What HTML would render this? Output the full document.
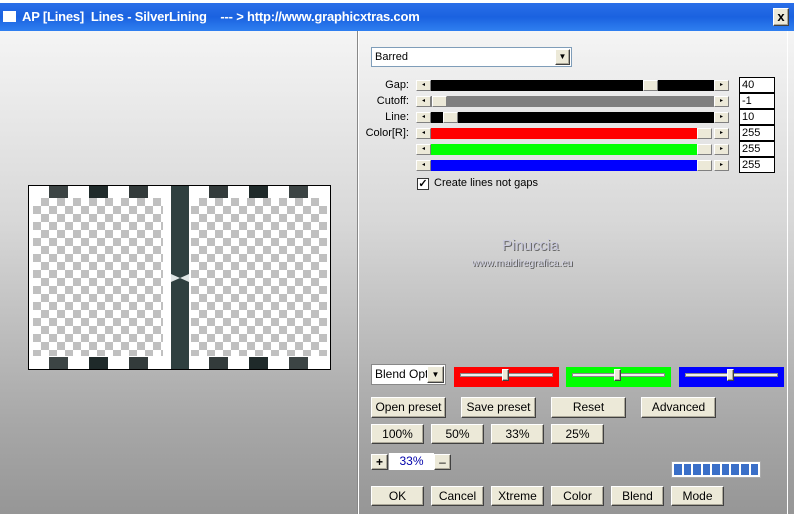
<!DOCTYPE html>
<html><head><meta charset="utf-8"><style>
*{margin:0;padding:0;box-sizing:border-box}
body{width:794px;height:514px;overflow:hidden;position:relative;font-family:"Liberation Sans",sans-serif;font-size:11px;background:linear-gradient(#fff 0,#f4f4f4 35px,#d8d8d8 220px,#a8a8a8 420px,#969696 514px)}
.a{position:absolute}
.title{left:0;top:3px;width:794px;height:28px;background:linear-gradient(#2a6ee8,#1a62e0 50%,#2f7ff0);color:#fff;font-weight:bold;font-size:13px;line-height:28px;padding-left:22px;letter-spacing:-0.2px}
.btn{position:absolute;background:#ece9d8;border:1px solid;border-color:#fff #404040 #404040 #fff;box-shadow:inset -1px -1px 0 #aca899;text-align:center;font-size:12px;color:#000}
.arr{position:absolute;width:15px;height:11px;background:#ece9d8;border:1px solid;border-color:#fff #808080 #808080 #fff;font-size:6px;line-height:9px;text-align:center}
.val{position:absolute;left:739px;width:36px;height:16px;background:#fff;border:1px solid #000;font-size:11px;line-height:14px;padding-left:2px}
.lbl{position:absolute;width:60px;left:349px;text-align:right;font-size:11px}
.chk{background-color:#fff;background-image:linear-gradient(45deg,#c0c0c0 25%,transparent 25%,transparent 75%,#c0c0c0 75%),linear-gradient(45deg,#c0c0c0 25%,transparent 25%,transparent 75%,#c0c0c0 75%);background-size:16px 16px;background-position:0 0,8px 8px}
</style></head><body>
<div class="a title">AP [Lines]&nbsp; Lines - SilverLining &nbsp;&nbsp; --- &gt; http://www.graphicxtras.com</div>
<div class="a" style="left:3px;top:11px;width:13px;height:11px;background:#fff;border-top:2px solid #fff"></div>
<div class="btn" style="left:773px;top:8px;width:16px;height:18px;font-weight:bold;font-size:13px;line-height:15px">x</div>
<div class="a" style="left:357px;top:31px;width:1px;height:483px;background:#888"></div>
<div class="a" style="left:358px;top:31px;width:1px;height:483px;background:#fff"></div>
<div class="a" style="left:787px;top:31px;width:1px;height:483px;background:#fff"></div>

<div class="a" style="left:28px;top:185px;width:303px;height:185px;border:1px solid #000;background:#fff">
 <div class="a chk" style="left:4px;top:12px;width:130px;height:158px"></div>
 <div class="a chk" style="left:162px;top:12px;width:136px;height:158px"></div>
 <div class="a" style="left:142px;top:0;width:18px;height:183px;background:#2f4040"></div>
 <div class="a" style="left:142px;top:88px;width:18px;height:8px;background:#dfe5e5;clip-path:polygon(0 0,50% 50%,100% 0,100% 100%,50% 50%,0 100%)"></div>
 <div class="a" style="left:20px;top:0;width:19px;height:12px;background:#3c4444"></div>
 <div class="a" style="left:60px;top:0;width:19px;height:12px;background:#1f2a2a"></div>
 <div class="a" style="left:100px;top:0;width:19px;height:12px;background:#333b3b"></div>
 <div class="a" style="left:180px;top:0;width:19px;height:12px;background:#333b3b"></div>
 <div class="a" style="left:220px;top:0;width:19px;height:12px;background:#1f2a2a"></div>
 <div class="a" style="left:260px;top:0;width:19px;height:12px;background:#3c4444"></div>
 <div class="a" style="left:20px;top:171px;width:19px;height:12px;background:#3c4444"></div>
 <div class="a" style="left:60px;top:171px;width:19px;height:12px;background:#1f2a2a"></div>
 <div class="a" style="left:100px;top:171px;width:19px;height:12px;background:#333b3b"></div>
 <div class="a" style="left:180px;top:171px;width:19px;height:12px;background:#333b3b"></div>
 <div class="a" style="left:220px;top:171px;width:19px;height:12px;background:#1f2a2a"></div>
 <div class="a" style="left:260px;top:171px;width:19px;height:12px;background:#3c4444"></div>
</div>

<div class="a" style="left:371px;top:47px;width:201px;height:20px;background:#fff;border:1px solid #7f9db9;font-size:11px;line-height:18px;padding-left:3px">Barred</div>
<div class="btn" style="left:555px;top:49px;width:15px;height:16px;font-size:8px;line-height:14px">▼</div>

<div class="lbl" style="top:79px">Gap:</div>
<div class="lbl" style="top:95px">Cutoff:</div>
<div class="lbl" style="top:111px">Line:</div>
<div class="lbl" style="top:127px">Color[R]:</div>

<div class="a" style="left:431px;top:80px;width:283px;height:11px;background:#000"></div>
<div class="arr" style="left:643px;top:80px"></div>
<div class="a" style="left:431px;top:96px;width:283px;height:11px;background:#808080"></div>
<div class="arr" style="left:432px;top:96px"></div>
<div class="a" style="left:431px;top:112px;width:283px;height:11px;background:#000"></div>
<div class="arr" style="left:443px;top:112px"></div>
<div class="a" style="left:431px;top:128px;width:266px;height:11px;background:#f00"></div>
<div class="arr" style="left:697px;top:128px"></div>
<div class="a" style="left:431px;top:144px;width:266px;height:11px;background:#0f0"></div>
<div class="arr" style="left:697px;top:144px"></div>
<div class="a" style="left:431px;top:160px;width:266px;height:11px;background:#00f"></div>
<div class="arr" style="left:697px;top:160px"></div>

<div class="arr" style="left:416px;top:80px">◂</div><div class="arr" style="left:714px;top:80px">▸</div>
<div class="arr" style="left:416px;top:96px">◂</div><div class="arr" style="left:714px;top:96px">▸</div>
<div class="arr" style="left:416px;top:112px">◂</div><div class="arr" style="left:714px;top:112px">▸</div>
<div class="arr" style="left:416px;top:128px">◂</div><div class="arr" style="left:714px;top:128px">▸</div>
<div class="arr" style="left:416px;top:144px">◂</div><div class="arr" style="left:714px;top:144px">▸</div>
<div class="arr" style="left:416px;top:160px">◂</div><div class="arr" style="left:714px;top:160px">▸</div>

<div class="val" style="top:77px">40</div>
<div class="val" style="top:93px">-1</div>
<div class="val" style="top:109px">10</div>
<div class="val" style="top:125px">255</div>
<div class="val" style="top:141px">255</div>
<div class="val" style="top:157px">255</div>

<div class="a" style="left:417px;top:178px;width:12px;height:12px;background:#fff;border:1px solid #333;font-size:11px;line-height:10px;text-align:center;font-weight:bold">✓</div>
<div class="a" style="left:434px;top:177px;font-size:11px">Create lines not gaps</div>

<div class="a" style="left:502px;top:237px;font-size:15px;color:#c8c8dc;text-shadow:1px 1px 0 #666">Pinuccia</div>
<div class="a" style="left:472px;top:258px;font-size:10px;color:#d0d0e0;text-shadow:1px 1px 0 #555">www.maidiregrafica.eu</div>

<div class="a" style="left:371px;top:364px;width:75px;height:21px;background:#fff;border:1px solid #888;font-size:12px;line-height:19px;padding-left:3px;overflow:hidden">Blend Optic</div>
<div class="btn" style="left:427px;top:366px;width:17px;height:17px;font-size:8px;line-height:15px">▼</div>
<div class="a" style="left:454px;top:367px;width:105px;height:20px;background:#f00"></div>
<div class="a" style="left:566px;top:367px;width:105px;height:20px;background:#0f0"></div>
<div class="a" style="left:679px;top:367px;width:105px;height:20px;background:#00f"></div>
<div class="a" style="left:460px;top:373px;width:93px;height:4px;background:#eee;border:1px solid #888"></div>
<div class="a" style="left:572px;top:373px;width:93px;height:4px;background:#eee;border:1px solid #888"></div>
<div class="a" style="left:685px;top:373px;width:93px;height:4px;background:#eee;border:1px solid #888"></div>
<div class="btn" style="left:502px;top:369px;width:7px;height:12px"></div>
<div class="btn" style="left:614px;top:369px;width:7px;height:12px"></div>
<div class="btn" style="left:727px;top:369px;width:7px;height:12px"></div>

<div class="btn" style="left:371px;top:397px;width:75px;height:21px;line-height:19px">Open preset</div>
<div class="btn" style="left:461px;top:397px;width:75px;height:21px;line-height:19px">Save preset</div>
<div class="btn" style="left:551px;top:397px;width:75px;height:21px;line-height:19px">Reset</div>
<div class="btn" style="left:641px;top:397px;width:75px;height:21px;line-height:19px">Advanced</div>

<div class="btn" style="left:371px;top:424px;width:53px;height:20px;line-height:18px">100%</div>
<div class="btn" style="left:431px;top:424px;width:53px;height:20px;line-height:18px">50%</div>
<div class="btn" style="left:491px;top:424px;width:53px;height:20px;line-height:18px">33%</div>
<div class="btn" style="left:551px;top:424px;width:53px;height:20px;line-height:18px">25%</div>

<div class="btn" style="left:371px;top:454px;width:17px;height:16px;line-height:14px;font-weight:bold">+</div>
<div class="a" style="left:389px;top:453px;width:45px;height:17px;background:#fff;color:#00a;font-size:12px;line-height:17px;text-align:center">33%</div>
<div class="btn" style="left:434px;top:454px;width:17px;height:16px;line-height:14px">–</div>

<div class="a" style="left:671px;top:461px;width:90px;height:17px;background:#fff;border:1px solid #aaa;padding:2px;display:flex;gap:2px">
<i style="flex:1;background:#3a6fc8"></i><i style="flex:1;background:#3a6fc8"></i><i style="flex:1;background:#3a6fc8"></i><i style="flex:1;background:#3a6fc8"></i><i style="flex:1;background:#3a6fc8"></i><i style="flex:1;background:#3a6fc8"></i><i style="flex:1;background:#3a6fc8"></i><i style="flex:1;background:#3a6fc8"></i><i style="flex:1;background:#3a6fc8"></i></div>

<div class="btn" style="left:371px;top:486px;width:53px;height:20px;line-height:18px">OK</div>
<div class="btn" style="left:431px;top:486px;width:53px;height:20px;line-height:18px">Cancel</div>
<div class="btn" style="left:491px;top:486px;width:53px;height:20px;line-height:18px">Xtreme</div>
<div class="btn" style="left:551px;top:486px;width:53px;height:20px;line-height:18px">Color</div>
<div class="btn" style="left:611px;top:486px;width:53px;height:20px;line-height:18px">Blend</div>
<div class="btn" style="left:671px;top:486px;width:53px;height:20px;line-height:18px">Mode</div>
</body></html>
